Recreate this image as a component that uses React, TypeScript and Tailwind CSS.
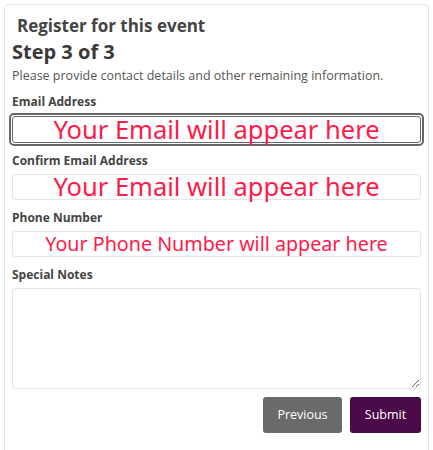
const FIELD =
  "h-[26px] w-full rounded-[3px] border border-[#e4e4e4] bg-white flex items-center justify-center";

const RED = "font-['Noto_Sans',sans-serif] text-[#ff1a4a] leading-none";

export default function App() {
  return (
    <div className="min-h-[450px] bg-white pt-[4px] px-[4px] font-['Open_Sans',sans-serif] text-[#3f3f3f]">
      <div className="h-[460px] rounded-t-[4px] border border-[#e6e6e6] px-[7px] pt-[11px]">
        <h2 className="pl-[5px] text-[17px] font-bold leading-[20px] text-[#444]">
          Register for this event
        </h2>
        <h3 className="mt-[4px] text-[20px] font-bold leading-[24px] text-[#3a3a3a]">
          Step 3 of 3
        </h3>
        <p className="mt-[3px] text-[12.5px] leading-[18px] text-[#555]">
          Please provide contact details and other remaining information.
        </p>

        <label className="mt-[8px] block text-[12px] font-bold leading-[18px] text-[#444]">
          Email Address
        </label>
        <div className="mt-[2px] -mx-[3px] rounded-[5px] border-[2px] border-[#666] p-[1px]">
          <div className="flex h-[27px] items-center justify-center rounded-[3px] border border-[#666] bg-white">
            <span className={`${RED} text-[25.5px]`}>Your Email will appear here</span>
          </div>
        </div>

        <label className="mt-[6px] block text-[12px] font-bold leading-[18px] text-[#444]">
          Confirm Email Address
        </label>
        <div className={`mt-[4px] ${FIELD}`}>
          <span className={`${RED} text-[25.5px]`}>Your Email will appear here</span>
        </div>

        <label className="mt-[9px] block text-[12px] font-bold leading-[18px] text-[#444]">
          Phone Number
        </label>
        <div className={`mt-[4px] ${FIELD}`}>
          <span className={`${RED} text-[19.7px]`}>Your Phone Number will appear here</span>
        </div>

        <label className="mt-[9px] block text-[12px] font-bold leading-[18px] text-[#444]">
          Special Notes
        </label>
        <textarea className="mt-[4px] block h-[101px] w-full rounded-[3px] border border-[#e4e4e4] bg-white outline-none" />

        <div className="mt-[8px] flex justify-end gap-[8px]">
          <button className="h-[36px] w-[79px] rounded-[3px] bg-[#6a6a6a] text-[12.5px] text-white">
            Previous
          </button>
          <button className="h-[36px] w-[71px] rounded-[3px] bg-[#4b0a49] text-[12.5px] text-white">
            Submit
          </button>
        </div>
      </div>
    </div>
  );
}
